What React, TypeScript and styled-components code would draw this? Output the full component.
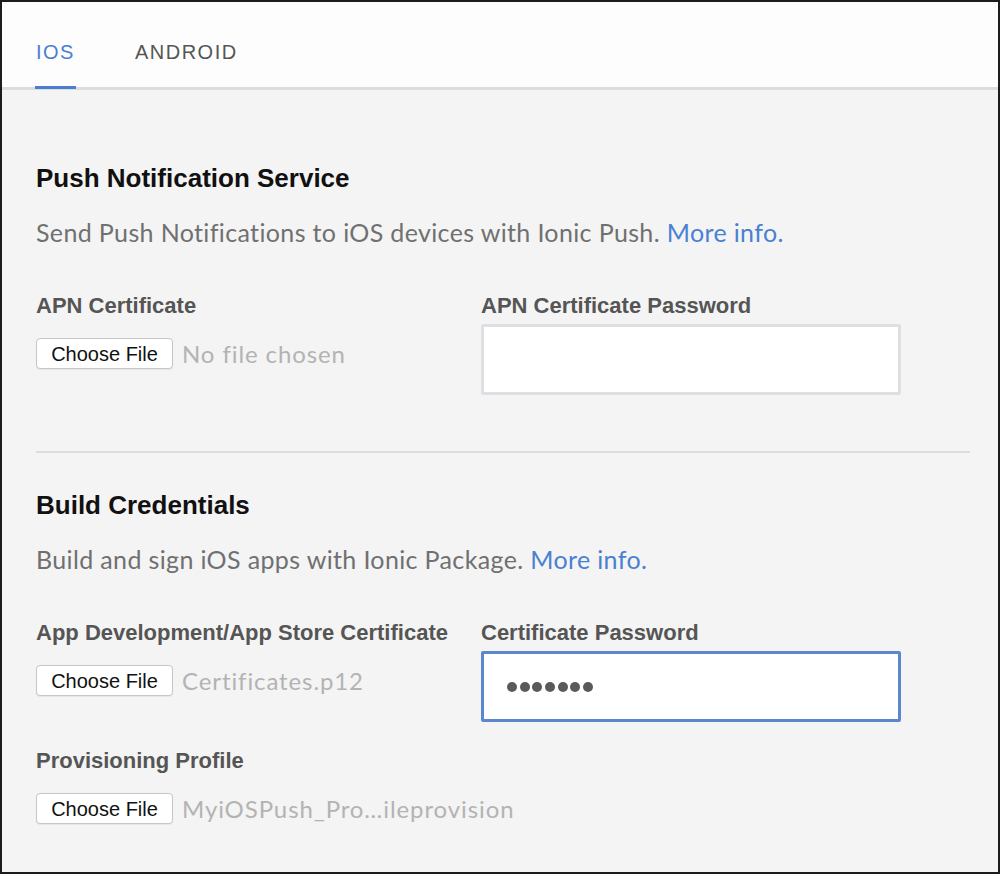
import styled, { createGlobalStyle } from "styled-components";

const GlobalStyle = createGlobalStyle`
    * {
        box-sizing: border-box;
    }

    body {
        margin: 0;
        background: #f4f4f4;
        font-family: "Liberation Sans", Arial, sans-serif;
    }
`;

const Frame = styled.div`
    width: 1000px;
    height: 874px;
    border: 2px solid #1c1c1c;
    background: #f4f4f4;
    overflow: hidden;
`;

const TabBar = styled.nav`
    display: flex;
    gap: 60px;
    height: 88px;
    padding-left: 34px;
    background: #fdfdfd;
    border-bottom: 3px solid #dcdce0;
`;

const Tab = styled.div<{ active?: boolean }>`
    position: relative;
    padding-top: 38px;
    font-size: 20px;
    line-height: 24px;
    letter-spacing: 1.5px;
    color: ${(props) => (props.active ? "#4a7fd0" : "#555")};

    &::after {
        content: "";
        display: ${(props) => (props.active ? "block" : "none")};
        position: absolute;
        left: -1px;
        right: -1px;
        bottom: -2px;
        height: 3px;
        background: #4a7fd0;
    }
`;

const Section = styled.section<{ top: number; bottom: number }>`
    padding: ${(props) => props.top}px 28px ${(props) => props.bottom}px 34px;
`;

const Divider = styled.hr`
    margin: 0 28px 0 34px;
    border: none;
    height: 2px;
    background: #dcdcdc;
`;

const Heading = styled.h2`
    margin: 0;
    font-size: 26px;
    line-height: 30px;
    font-weight: 700;
    color: #111;
`;

const Description = styled.p`
    margin: 24px 0 46px;
    font-family: Lato, "Open Sans", sans-serif;
    font-size: 25px;
    line-height: 30px;
    letter-spacing: 0.36px;
    color: #707070;

    a {
        color: #4a80d2;
        text-decoration: none;
    }
`;

const FieldGrid = styled.div`
    display: grid;
    grid-template-columns: 445px 420px;
    row-gap: 26px;
`;

const Field = styled.div`
    display: flex;
    flex-direction: column;
    gap: 6px;
`;

const Label = styled.label`
    font-size: 22px;
    line-height: 25px;
    font-weight: 700;
    color: #555;
    white-space: nowrap;
`;

const FileRow = styled.div`
    display: flex;
    align-items: center;
    gap: 9px;
    padding-top: 14px;
`;

const FileButton = styled.button`
    flex-shrink: 0;
    width: 137px;
    height: 31px;
    padding: 1px 0 0;
    border: 1px solid #c6c6c6;
    border-radius: 4px;
    background: #fff;
    box-shadow: 0 1px 1px rgba(0, 0, 0, 0.06);
    font-family: "Liberation Sans", Arial, sans-serif;
    font-size: 20px;
    color: #111;
`;

const FileName = styled.span`
    font-family: Lato, "Open Sans", sans-serif;
    font-size: 24px;
    letter-spacing: 0.9px;
    color: #b3b3b3;
    white-space: nowrap;
`;

const PasswordBox = styled.div<{ focused?: boolean }>`
    display: flex;
    align-items: center;
    gap: 2.7px;
    width: 420px;
    height: 71px;
    padding: 0 0 0 23px;
    background: #fff;
    border: 3px solid ${(props) => (props.focused ? "#5b87cf" : "#dfdfe3")};
    border-radius: 2px;
`;

const Dot = styled.span`
    width: 10px;
    height: 10px;
    border-radius: 50%;
    background: #5a5a5a;
`;

const FileField = ({ label, file }: { label: string; file: string }) => (
    <Field>
        <Label>{label}</Label>
        <FileRow>
            <FileButton>Choose File</FileButton>
            <FileName>{file}</FileName>
        </FileRow>
    </Field>
);

const PasswordField = ({
    label,
    length,
    focused,
}: {
    label: string;
    length: number;
    focused?: boolean;
}) => (
    <Field>
        <Label>{label}</Label>
        <PasswordBox focused={focused}>
            {Array.from({ length }).map((_, i) => (
                <Dot key={i} />
            ))}
        </PasswordBox>
    </Field>
);

const App = () => {
    return (
        <>
            <GlobalStyle />
            <Frame>
                <TabBar>
                    <Tab active>IOS</Tab>
                    <Tab>ANDROID</Tab>
                </TabBar>

                <Section top={73} bottom={56}>
                    <Heading>Push Notification Service</Heading>
                    <Description>
                        Send Push Notifications to iOS devices with Ionic Push.{" "}
                        <a href="#">More info.</a>
                    </Description>
                    <FieldGrid>
                        <FileField label="APN Certificate" file="No file chosen" />
                        <PasswordField label="APN Certificate Password" length={0} />
                    </FieldGrid>
                </Section>

                <Divider />

                <Section top={37} bottom={0}>
                    <Heading>Build Credentials</Heading>
                    <Description>
                        Build and sign iOS apps with Ionic Package.{" "}
                        <a href="#">More info.</a>
                    </Description>
                    <FieldGrid>
                        <FileField
                            label="App Development/App Store Certificate"
                            file="Certificates.p12"
                        />
                        <PasswordField
                            label="Certificate Password"
                            length={7}
                            focused
                        />
                        <FileField
                            label="Provisioning Profile"
                            file="MyiOSPush_Pro…ileprovision"
                        />
                    </FieldGrid>
                </Section>
            </Frame>
        </>
    );
};

export default App;
